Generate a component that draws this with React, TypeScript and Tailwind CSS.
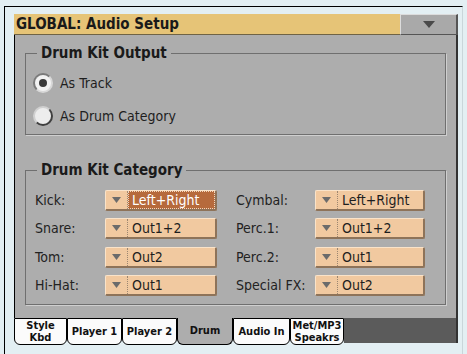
import React from "react";

const F = "font-['DejaVu_Sans_Condensed','DejaVu_Sans','Liberation_Sans',sans-serif]";

function Tri({ w = 9, h = 6, c = "#6b6b6b" }: { w?: number; h?: number; c?: string }) {
  return (
    <svg width={w} height={h} viewBox={`0 0 ${w} ${h}`}>
      <polygon points={`0,0 ${w},0 ${w / 2},${h}`} fill={c} />
    </svg>
  );
}

function Drop({ value, selected, w }: { value: string; selected?: boolean; w: string }) {
  return (
    <div
      className={`flex h-[21px] ${w} bg-[#f1c9a0] border-t border-l border-[#fae3c9] border-r-2 border-b-2 border-r-[#8e7359] border-b-[#8e7359] rounded-[2px]`}
    >
      <div className="w-[22px] shrink-0 flex items-center justify-center border-r border-dotted border-[#9c8670]">
        <Tri />
      </div>
      {selected ? (
        <div className="flex-1 flex items-center pl-[4px] bg-[#b66a3c] text-white outline outline-1 outline-dotted outline-[#f2d7bd] -outline-offset-1 text-[14px] leading-none">
          {value}
        </div>
      ) : (
        <div className="flex-1 flex items-center pl-[4px] text-[#1e1e1e] text-[14px] leading-none">{value}</div>
      )}
    </div>
  );
}

function Row({ l, lv, ls, r, rv }: { l: string; lv: string; ls?: boolean; r: string; rv: string }) {
  return (
    <div className="flex items-center h-[28.5px]">
      <div className="w-[70px] text-[14px] text-[#222]">{l}</div>
      <Drop value={lv} selected={ls} w="w-[112px]" />
      <div className="w-[19px]" />
      <div className="w-[79px] text-[14px] text-[#222]">{r}</div>
      <Drop value={rv} w="w-[110px]" />
    </div>
  );
}

function Tab({ children, w, sel }: { children: React.ReactNode; w: string; sel?: boolean }) {
  return (
    <div
      className={`${w} h-[27px] shrink-0 flex items-center justify-center text-center text-[11px] leading-[12px] font-semibold text-[#111] border-x border-b border-black rounded-b-[6px] ${
        sel ? "bg-[#adadad]" : "bg-[#fbfbfb] border-t"
      }`}
    >
      {children}
    </div>
  );
}

export default function App() {
  return (
    <div className={`w-[467px] h-[354px] bg-[#e3eff3] overflow-hidden ${F}`}>
      <div className="ml-[4px] mt-[6px] w-[459px] h-[348px] border-l border-t border-r border-l-black border-t-black border-r-[#c9d6da] pl-[9px] pt-[7px]">
        <div className="w-[444px] flex flex-col">
          {/* title */}
          <div className="flex h-[21px]">
            <div className="flex-1 bg-[#e6c477] border-b border-[#6f6345] flex items-center pl-[2px] text-[15px] font-bold text-[#1a1a1a] leading-none">
              GLOBAL: Audio Setup
            </div>
            <div className="w-[58px] bg-[#a9a9a9] border-t border-l border-[#dcdcdc] border-r-2 border-b border-r-[#555] border-b-[#555] flex items-center justify-center">
              <Tri w={12} h={7} c="#4a4a4a" />
            </div>
          </div>
          {/* body */}
          <div className="h-[283px] bg-[#adadad] border-l border-black border-r-2 border-r-[#333] pl-[10px] pr-[10px] pt-[9px]">
            <fieldset className="border border-[#6f6f6f] h-[91px] pl-[7px] shadow-[1px_1px_0_#cfcfcf]">
              <legend className="ml-[4px] px-[4px] text-[15px] leading-[18px] font-bold text-[#1a1a1a]">
                Drum Kit Output
              </legend>
              <div className="flex items-center h-[22px] mt-[10px] gap-[7px]">
                <div className="w-[20px] h-[20px] rounded-full bg-[#f2f2f2] border-2 border-[#7a7a7a] border-r-[#d8d8d8] border-b-[#d8d8d8] flex items-center justify-center">
                  <div className="w-[8px] h-[8px] rounded-full bg-[#3a3a3a]" />
                </div>
                <span className="text-[14px] text-[#1e1e1e]">As Track</span>
              </div>
              <div className="flex items-center h-[22px] mt-[11px] gap-[7px]">
                <div className="w-[20px] h-[20px] rounded-full bg-[#ededed] border-2 border-[#d0d0d0] border-r-[#3f3f3f] border-b-[#3f3f3f]" />
                <span className="text-[14px] text-[#1e1e1e]">As Drum Category</span>
              </div>
            </fieldset>
            <fieldset className="mt-[26px] border border-[#6f6f6f] h-[144px] pl-[9px] shadow-[1px_1px_0_#cfcfcf]">
              <legend className="ml-[2px] px-[4px] text-[15px] leading-[18px] font-bold text-[#1a1a1a]">
                Drum Kit Category
              </legend>
              <div className="mt-[7px]">
                <Row l="Kick:" lv="Left+Right" ls r="Cymbal:" rv="Left+Right" />
                <Row l="Snare:" lv="Out1+2" r="Perc.1:" rv="Out1+2" />
                <Row l="Tom:" lv="Out2" r="Perc.2:" rv="Out1" />
                <Row l="Hi-Hat:" lv="Out1" r="Special FX:" rv="Out2" />
              </div>
            </fieldset>
          </div>
          {/* tabs */}
          <div className="flex h-[27px]">
            <Tab w="w-[53px]">
              Style
              <br />
              Kbd
            </Tab>
            <Tab w="w-[55px]">Player 1</Tab>
            <Tab w="w-[55px]">Player 2</Tab>
            <Tab w="w-[56px]" sel>
              Drum
            </Tab>
            <Tab w="w-[57px]">Audio In</Tab>
            <Tab w="w-[54px]">
              Met/MP3
              <br />
              Speakrs
            </Tab>
            <div className="flex-1 h-[25px] bg-[#5b5b5b] border-r-2 border-[#333]" />
          </div>
        </div>
      </div>
    </div>
  );
}
